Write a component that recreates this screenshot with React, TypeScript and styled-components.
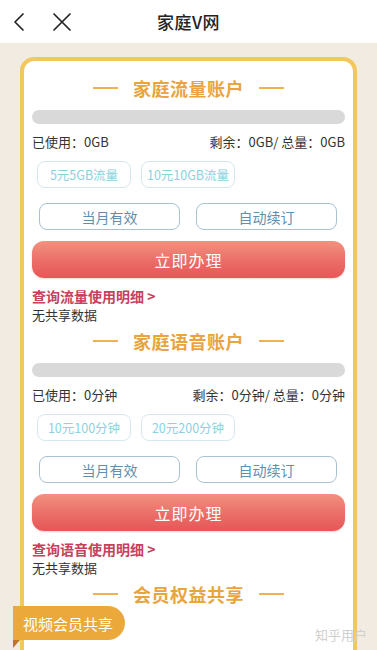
import React from "react";
import styled, { createGlobalStyle } from "styled-components";

const GlobalStyle = createGlobalStyle`
  * { box-sizing: border-box; }
  body {
    margin: 0;
    background: #f2ebe2;
    font-family: "Noto Sans CJK SC", "Noto Sans", sans-serif;
    color: #333;
  }
`;

const Page = styled.div`
  width: 377px;
  height: 650px;
  overflow: hidden;
  position: relative;
  background: #f2ebe2;
`;

const Header = styled.header`
  height: 43px;
  background: #fff;
  display: flex;
  align-items: center;
  position: relative;
  padding-left: 11px;
  gap: 22px;
`;

const HeaderIcon = styled.svg`
  display: block;
  stroke: #222;
  stroke-width: 1.7;
  fill: none;
  stroke-linecap: round;
  stroke-linejoin: round;
`;

const HeaderTitle = styled.h1`
  position: absolute;
  left: 0;
  right: 0;
  margin: 0;
  text-align: center;
  font-size: 17px;
  font-weight: 500;
  color: #222;
  letter-spacing: 0.5px;
  pointer-events: none;
`;

const Body = styled.main`
  padding: 14px 20px 0;
`;

const Card = styled.section`
  background: #fff;
  border: 4px solid #f2c85c;
  border-radius: 14px;
  padding: 15px 8px 60px;
  min-height: 700px;
`;

const Title = styled.div<{ $top?: number }>`
  display: flex;
  align-items: center;
  justify-content: center;
  gap: 15px;
  height: 24px;
  margin-top: ${(p) => p.$top ?? 0}px;
  font-size: 18px;
  font-weight: 700;
  color: #e9a43f;
  letter-spacing: 0.5px;
  &::before,
  &::after {
    content: "";
    width: 25px;
    height: 2px;
    background: #efb24e;
  }
`;

const Bar = styled.div`
  margin-top: 10px;
  height: 14px;
  border-radius: 7px;
  background: #d9d9d9;
`;

const UsageRow = styled.div`
  margin-top: 9px;
  display: flex;
  justify-content: space-between;
  font-size: 13px;
  line-height: 18px;
  color: #333;
`;

const PackageRow = styled.div`
  margin-top: 10px;
  display: flex;
  gap: 10px;
  padding-left: 5px;
`;

const PackageButton = styled.div`
  width: 94px;
  height: 27px;
  border: 1px solid #d3e8ee;
  border-radius: 8px;
  display: flex;
  align-items: center;
  justify-content: center;
  font-size: 12.5px;
  color: #8cd2de;
`;

const OptionRow = styled.div`
  margin-top: 15px;
  display: flex;
  gap: 16px;
  padding: 0 8px 0 7px;
`;

const OptionButton = styled.div`
  flex: 1;
  height: 27px;
  border: 1px solid #a9c2d2;
  border-radius: 8px;
  display: flex;
  align-items: center;
  justify-content: center;
  font-size: 14px;
  color: #5f8fae;
`;

const SubmitButton = styled.div`
  margin-top: 11px;
  height: 37px;
  border-radius: 12px;
  background: linear-gradient(180deg, #f2917f 0%, #eb6a66 60%, #e65757 100%);
  box-shadow: 0 1px 2px rgba(200, 80, 80, 0.25);
  display: flex;
  align-items: center;
  justify-content: center;
  font-size: 16px;
  color: #fff;
  letter-spacing: 1px;
`;

const DetailLink = styled.div`
  margin-top: 8px;
  font-size: 14px;
  line-height: 20px;
  font-weight: 700;
  color: #c8405c;
`;

const NoData = styled.div`
  font-size: 13px;
  line-height: 18px;
  color: #333;
`;

const Ribbon = styled.div`
  position: relative;
  margin: 0 0 0 -19px;
  width: 112px;
  height: 34px;
  border-radius: 0 17px 17px 0;
  background: #eba93c;
  display: flex;
  align-items: center;
  padding-left: 10px;
  font-size: 15px;
  color: #fff;
  &::after {
    content: "";
    position: absolute;
    left: 0;
    top: 34px;
    border-top: 8px solid #b9782a;
    border-right: 7px solid transparent;
  }
`;

const Watermark = styled.div`
  position: absolute;
  right: 10px;
  bottom: 6px;
  font-size: 13px;
  color: #cfcfcf;
`;

type Account = {
  title: string;
  unit: string;
  packages: string[];
  link: string;
};

const accounts: Account[] = [
  {
    title: "家庭流量账户",
    unit: "GB",
    packages: ["5元5GB流量", "10元10GB流量"],
    link: "查询流量使用明细 >",
  },
  {
    title: "家庭语音账户",
    unit: "分钟",
    packages: ["10元100分钟", "20元200分钟"],
    link: "查询语音使用明细 >",
  },
];

const AccountSection: React.FC<{ data: Account; first: boolean }> = ({ data, first }) => (
  <>
    <Title $top={first ? 0 : 5}>{data.title}</Title>
    <Bar />
    <UsageRow>
      <span>已使用：0{data.unit}</span>
      <span>
        剩余：0{data.unit}/ 总量：0{data.unit}
      </span>
    </UsageRow>
    <PackageRow>
      {data.packages.map((p) => (
        <PackageButton key={p}>{p}</PackageButton>
      ))}
    </PackageRow>
    <OptionRow>
      <OptionButton>当月有效</OptionButton>
      <OptionButton>自动续订</OptionButton>
    </OptionRow>
    <SubmitButton>立即办理</SubmitButton>
    <DetailLink>{data.link}</DetailLink>
    <NoData>无共享数据</NoData>
  </>
);

const App: React.FC = () => {
  return (
    <Page>
      <GlobalStyle />
      <Header>
        <HeaderIcon width="18" height="20" viewBox="0 0 18 20">
          <path d="M12 2 L4 10 L12 18" />
        </HeaderIcon>
        <HeaderIcon width="22" height="20" viewBox="0 0 22 20">
          <path d="M3 2 L19 18 M19 2 L3 18" />
        </HeaderIcon>
        <HeaderTitle>家庭V网</HeaderTitle>
      </Header>
      <Body>
        <Card>
          {accounts.map((a, i) => (
            <AccountSection key={a.title} data={a} first={i === 0} />
          ))}
          <Title $top={5}>会员权益共享</Title>
          <Ribbon>视频会员共享</Ribbon>
        </Card>
      </Body>
      <Watermark>知乎用户</Watermark>
    </Page>
  );
};

export default App;
